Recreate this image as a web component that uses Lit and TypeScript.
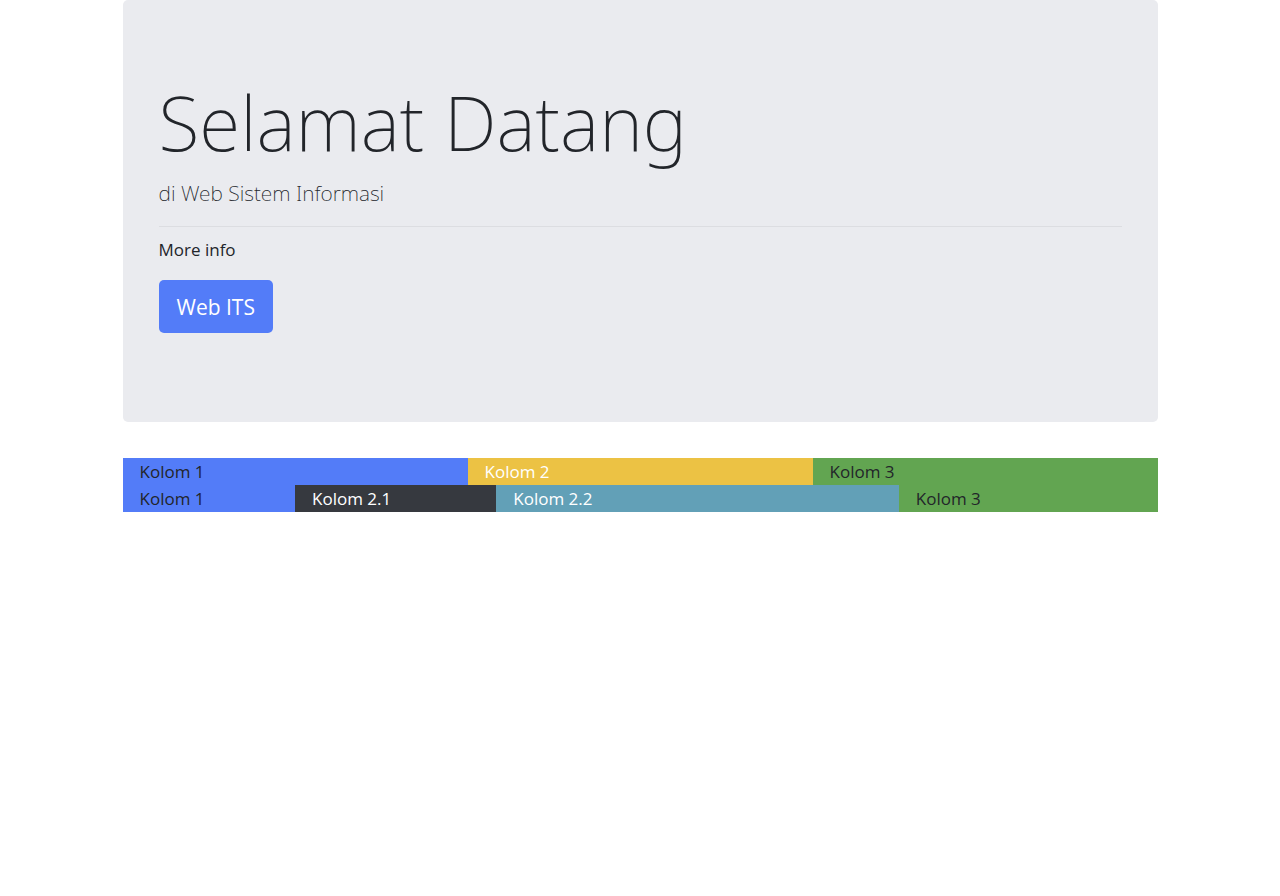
import { LitElement, html, css } from "lit";
import { customElement } from "lit/decorators.js";

@customElement("app-root")
export class AppRoot extends LitElement {
  static styles = css`
    :host {
      display: block;
      font-family: "Segoe UI", "Open Sans", "Noto Sans", sans-serif;
      font-size: 17px;
      line-height: 27px;
      color: #22252a;
    }
    *,
    *::before,
    *::after {
      box-sizing: border-box;
    }
    .container {
      max-width: 1035px;
      margin: 0 auto;
    }
    .jumbotron {
      padding: 72px 36px 89px;
      margin-bottom: 36px;
      background: #eaebef;
      border-radius: 5px;
    }
    h1,
    .lead {
      font-family: "Segoe UI", "Noto Sans", "Open Sans", sans-serif;
      font-weight: 200;
    }
    h1 {
      margin: 0 0 4px;
      font-size: 75px;
      line-height: 100px;
    }
    .lead {
      margin: 0;
      font-size: 21px;
      line-height: 34px;
    }
    hr {
      margin: 16px 0 9px;
      border: 0;
      border-top: 1px solid #dcdde1;
    }
    .info {
      margin: 0 0 17px;
    }
    .button {
      display: inline-block;
      padding: 10px 18px 8px;
      border-radius: 5px;
      background: #537cf8;
      color: #fff;
      font-size: 21px;
      line-height: 35px;
      text-decoration: none;
      vertical-align: top;
    }
    .row {
      display: grid;
      grid-template-columns: repeat(12, 1fr);
    }
    .col {
      padding: 0 17px;
    }
    .span-2 {
      grid-column: span 2;
    }
    .span-3 {
      grid-column: span 3;
    }
    .span-4 {
      grid-column: span 4;
    }
    .nested {
      grid-column: span 7;
      display: grid;
      grid-template-columns: 1fr 2fr;
    }
    .primary {
      background: #537cf8;
    }
    .warning {
      background: #ecc244;
      color: #fff;
    }
    .success {
      background: #62a551;
    }
    .dark {
      background: #36393f;
      color: #fff;
    }
    .info-bg {
      background: #62a0b7;
      color: #fff;
    }
  `;

  render() {
    return html`
      <main class="container">
        <header class="jumbotron">
          <h1>Selamat Datang</h1>
          <p class="lead">di Web Sistem Informasi</p>
          <hr />
          <p class="info">More info</p>
          <a class="button" href="#">Web ITS</a>
        </header>
        <div class="row">
          <div class="col span-4 primary">Kolom 1</div>
          <div class="col span-4 warning">Kolom 2</div>
          <div class="col span-4 success">Kolom 3</div>
        </div>
        <div class="row">
          <div class="col span-2 primary">Kolom 1</div>
          <div class="nested">
            <div class="col dark">Kolom 2.1</div>
            <div class="col info-bg">Kolom 2.2</div>
          </div>
          <div class="col span-3 success">Kolom 3</div>
        </div>
      </main>
    `;
  }
}
